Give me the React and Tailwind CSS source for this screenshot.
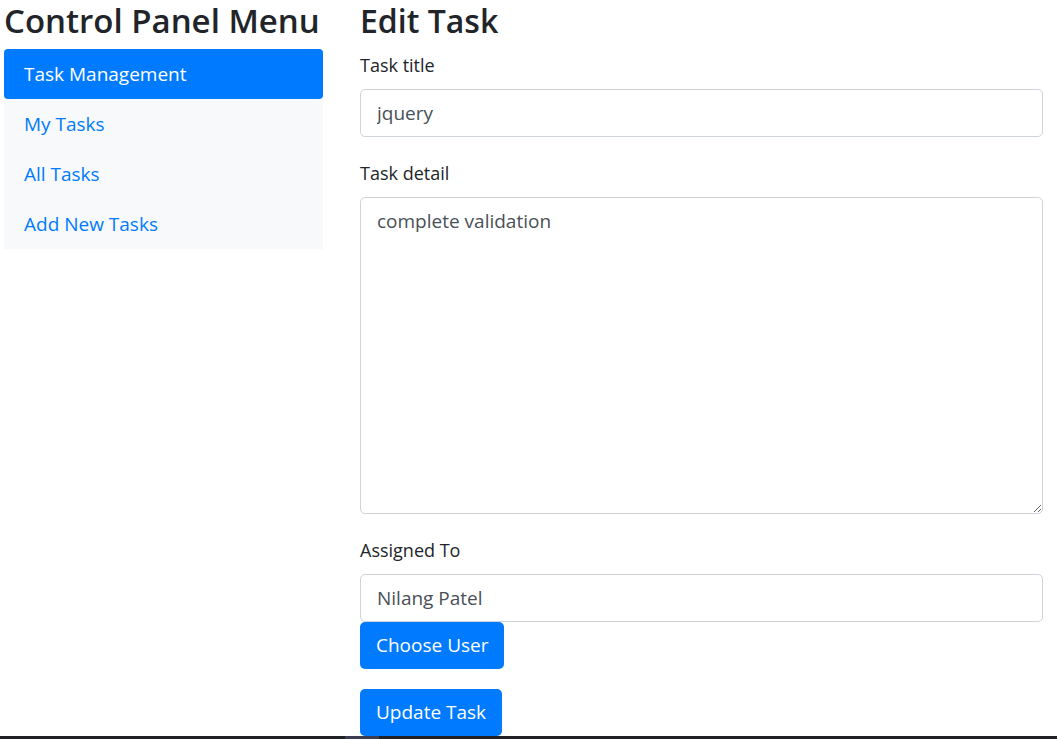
import React from 'react';

const menu = ['My Tasks', 'All Tasks', 'Add New Tasks'];

const Label = ({ children }) => (
  <label className="block h-[27px] mt-[2px] mb-[10px] text-[18px] leading-[27px] text-[#212529]">{children}</label>
);

const App = () => {
  return (
    <div className="min-h-[739px] bg-white font-['Open_Sans',sans-serif] flex flex-col">
      <div className="flex flex-1 pl-[4px] pr-[14px]">
        <div className="w-[319px] shrink-0">
          <h2 className="h-[49px] text-[33px] leading-[42px] font-semibold text-[#212529] whitespace-nowrap">Control Panel Menu</h2>
          <ul className="bg-[#f8f9fa]">
            <li className="h-[50px] flex items-center px-[20px] bg-[#007bff] text-white text-[19px] rounded-[4px]">Task Management</li>
            {menu.map((m) => (
              <li key={m} className="h-[50px] flex items-center px-[20px] text-[#007bff] text-[19px]">{m}</li>
            ))}
          </ul>
        </div>
        <div className="flex-1 ml-[37px] flex flex-col items-start">
          <h2 className="h-[50px] text-[32px] leading-[42px] font-semibold text-[#212529]">Edit Task</h2>
          <div className="self-stretch mb-[21px]">
            <Label>Task title</Label>
            <input
              defaultValue="jquery"
              className="block w-full h-[48px] px-[16px] border border-[#ced4da] rounded-[5px] text-[19px] text-[#495057] outline-none"
            />
          </div>
          <div className="self-stretch mb-[21px]">
            <Label>Task detail</Label>
            <textarea
              defaultValue="complete validation"
              className="block w-full h-[317px] px-[16px] py-[8px] leading-[30px] border border-[#ced4da] rounded-[5px] text-[19px] text-[#495057] outline-none"
            />
          </div>
          <div className="self-stretch">
            <Label>Assigned To</Label>
            <input
              defaultValue="Nilang Patel"
              className="block w-full h-[48px] px-[16px] border border-[#ced4da] rounded-[5px] text-[19px] text-[#495057] outline-none"
            />
            <button className="h-[47px] px-[16px] bg-[#007bff] text-white text-[19px] rounded-[5px]">Choose User</button>
          </div>
          <button className="mt-[20px] h-[47px] px-[16px] bg-[#007bff] text-white text-[19px] rounded-[5px]">Update Task</button>
        </div>
      </div>
      <div className="h-[3px] bg-[#202124] flex">
        <div className="ml-[345px] w-[34px] bg-[#3c3c52]"></div>
      </div>
    </div>
  );
};

export default App;
